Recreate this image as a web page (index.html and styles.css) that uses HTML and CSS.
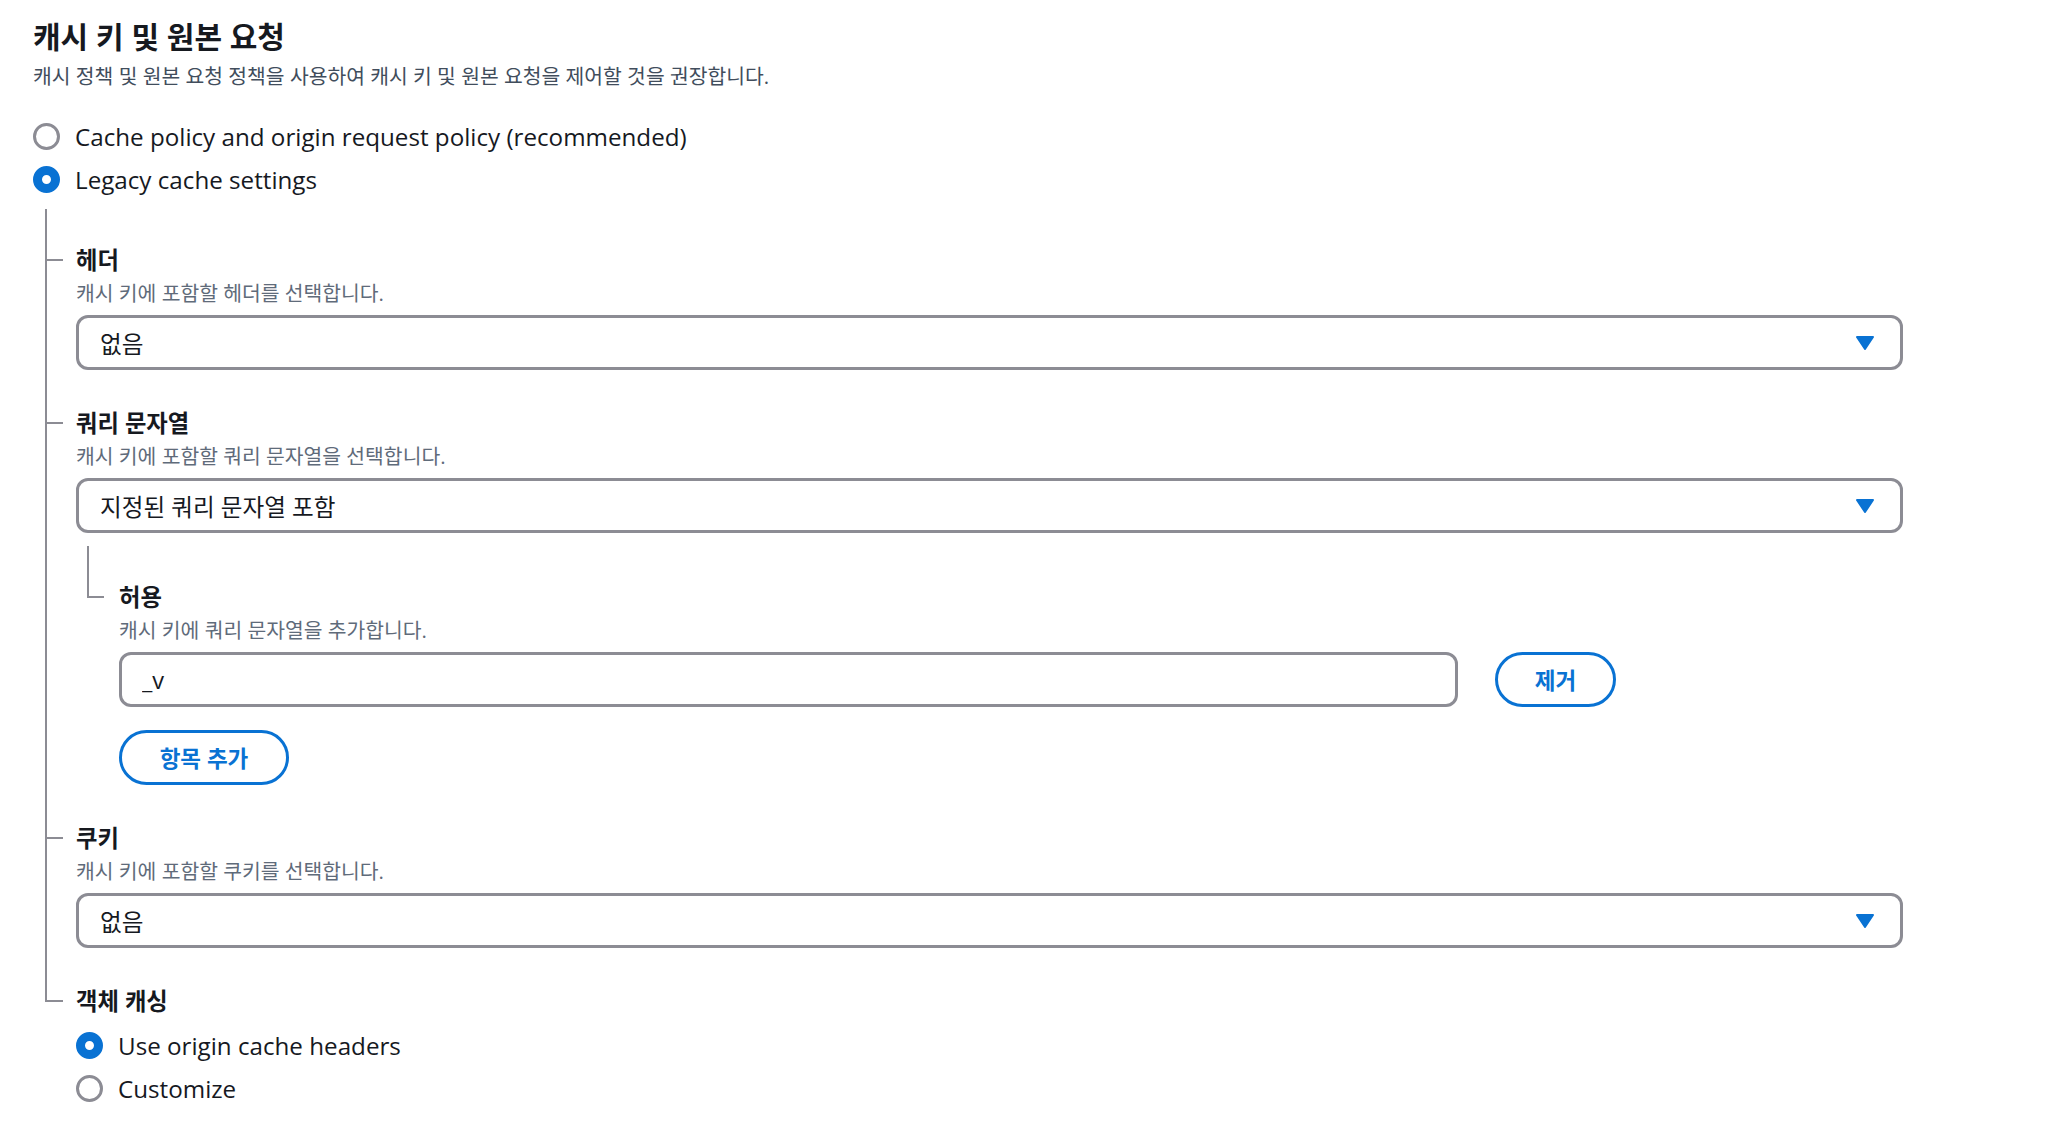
FILE: index.html
```html
<!DOCTYPE html>
<html lang="ko">
<head>
  <meta charset="UTF-8">
  <meta name="viewport" content="width=device-width, initial-scale=1">
  <title>캐시 키 및 원본 요청</title>

  <link rel="stylesheet" href="styles.css">
</head>

<body>
  <div class="page">

    <h1 class="title">캐시 키 및 원본 요청</h1>
    <p class="subtitle">캐시 정책 및 원본 요청 정책을 사용하여 캐시 키 및 원본 요청을 제어할 것을 권장합니다.</p>

    <div class="radio-group">
      <label class="radio-row"><span class="radio"></span>Cache policy and origin request policy (recommended)</label>
      <label class="radio-row"><span class="radio checked"></span>Legacy cache settings</label>
    </div>

    <div class="tree">
      <div class="branch">
        <div class="label">헤더</div>
        <div class="desc">캐시 키에 포함할 헤더를 선택합니다.</div>
        <div class="select">
          <span>없음</span>
          <svg class="caret" width="18" height="14" viewBox="0 0 18 14"><path d="M1 1 H17 L9 13 Z" fill="#0972d3" stroke="#0972d3" stroke-width="2" stroke-linejoin="round"/></svg>
        </div>
      </div>

      <div class="branch">
        <div class="label">쿼리 문자열</div>
        <div class="desc">캐시 키에 포함할 쿼리 문자열을 선택합니다.</div>
        <div class="select">
          <span>지정된 쿼리 문자열 포함</span>
          <svg class="caret" width="18" height="14" viewBox="0 0 18 14"><path d="M1 1 H17 L9 13 Z" fill="#0972d3" stroke="#0972d3" stroke-width="2" stroke-linejoin="round"/></svg>
        </div>

        <div class="sub-branch">
          <div class="label">허용</div>
          <div class="desc">캐시 키에 쿼리 문자열을 추가합니다.</div>
          <div class="attr-row">
            <input class="text-input" type="text" value="_v">
            <button class="btn">제거</button>
          </div>
          <button class="btn add-btn">항목 추가</button>
        </div>
      </div>

      <div class="branch">
        <div class="label">쿠키</div>
        <div class="desc">캐시 키에 포함할 쿠키를 선택합니다.</div>
        <div class="select">
          <span>없음</span>
          <svg class="caret" width="18" height="14" viewBox="0 0 18 14"><path d="M1 1 H17 L9 13 Z" fill="#0972d3" stroke="#0972d3" stroke-width="2" stroke-linejoin="round"/></svg>
        </div>
      </div>
    </div>

    <div class="branch-last">
      <div class="label">객체 캐싱</div>
      <div class="radio-group inner">
        <label class="radio-row"><span class="radio checked"></span>Use origin cache headers</label>
        <label class="radio-row"><span class="radio"></span>Customize</label>
      </div>
    </div>

  </div>
</body>
</html>
```

FILE: styles.css
```css
body {
  margin: 0;
  background-color: #ffffff;
  color: #16191f;
  font-family: "Open Sans", "Noto Sans CJK KR", sans-serif;
}

.page {
  padding: 19px 145px 40px 33px;
}

.title {
  margin: 0;
  font-size: 30px;
  line-height: 36px;
  font-weight: 700;
}

.subtitle {
  margin: 8px 0 0;
  font-size: 20.4px;
  line-height: 26px;
  color: #414d5c;
}

.radio-group {
  display: flex;
  flex-direction: column;
  gap: 13px;
  margin-top: 32px;
}

.radio-group.inner {
  margin-top: 14px;
}

.radio-row {
  display: flex;
  align-items: center;
  gap: 15px;
  height: 30px;
  font-size: 24.2px;
}

.radio {
  width: 27px;
  height: 27px;
  box-sizing: border-box;
  border: 3px solid #8c8c94;
  border-radius: 50%;
  flex-shrink: 0;
}

.radio.checked {
  border: 9px solid #0972d3;
}

/* tree lines */
.tree {
  margin: 15px 0 0 12px;
  padding: 36px 0 38px 29px;
  border-left: 2px solid #8c8c94;
}

.branch {
  position: relative;
  padding-bottom: 38px;
}

.branch:last-child {
  padding-bottom: 0;
}

.branch::before {
  content: "";
  position: absolute;
  left: -29px;
  top: 14px;
  width: 16px;
  height: 2px;
  background-color: #8c8c94;
}

.branch-last {
  position: relative;
  margin-left: 12px;
  padding-left: 31px;
}

.branch-last::before {
  content: "";
  position: absolute;
  left: 0;
  top: -38px;
  width: 16px;
  height: 52px;
  border-left: 2px solid #8c8c94;
  border-bottom: 2px solid #8c8c94;
}

.sub-branch {
  position: relative;
  margin: 13px 0 0 11px;
  padding: 36px 0 0 32px;
}

.sub-branch::before {
  content: "";
  position: absolute;
  left: 0;
  top: 0;
  width: 15px;
  height: 50px;
  border-left: 2px solid #8c8c94;
  border-bottom: 2px solid #8c8c94;
}

.label {
  font-size: 23.3px;
  line-height: 30px;
  font-weight: 700;
}

.desc {
  margin: 5px 0 9px;
  font-size: 20.4px;
  line-height: 26px;
  color: #5f6b7a;
}

.select {
  display: flex;
  align-items: center;
  justify-content: space-between;
  height: 55px;
  box-sizing: border-box;
  padding: 0 26px 0 21px;
  border: 3px solid #8c8c94;
  border-radius: 12px;
  font-size: 23.6px;
}

.attr-row {
  display: flex;
  gap: 37px;
  max-width: 1497px;
}

.text-input {
  flex: 1;
  height: 55px;
  box-sizing: border-box;
  padding: 0 20px;
  border: 3px solid #8c8c94;
  border-radius: 12px;
  font-family: "Open Sans", "Noto Sans CJK KR", sans-serif;
  font-size: 23.6px;
  color: #16191f;
  outline: none;
}

.btn {
  width: 121px;
  height: 55px;
  box-sizing: border-box;
  border: 3px solid #0972d3;
  border-radius: 28px;
  background-color: #ffffff;
  color: #0972d3;
  font-family: "Open Sans", "Noto Sans CJK KR", sans-serif;
  font-size: 22.5px;
  font-weight: 700;
  cursor: pointer;
}

.add-btn {
  display: block;
  width: 170px;
  margin-top: 23px;
}
```
